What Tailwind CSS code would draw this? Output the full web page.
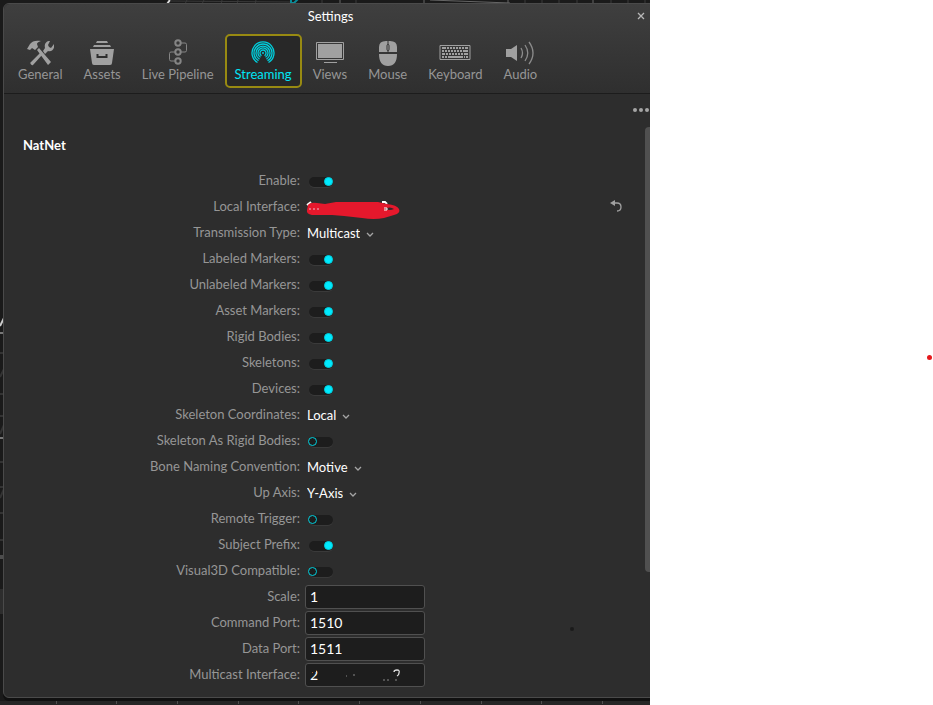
<!DOCTYPE html>
<html lang="en">
<head>
<meta charset="utf-8">
<title>Settings</title>
<script src="https://cdn.jsdelivr.net/npm/@tailwindcss/browser@4"></script>
</head>
<body class="flex min-h-screen bg-white font-['Lato',sans-serif] text-sm text-[#969696]">
<main class="relative flex min-w-0 flex-1 overflow-hidden bg-[#1a1a1a] pt-[3px] pl-[3px] pb-[7px]">
  <!-- viewport grid visible behind the window -->
  <svg class="absolute top-0 left-0" width="650" height="705" fill="none" aria-hidden="true">
    <path d="M170 0l-3 4" stroke="#ddd" stroke-width="2"/>
    <path d="M187 0l-2 4M204 0l-2 4M222 0l-1 4M238 0l-1 4M256 0l-1 4M322 0v4M356 0v4M525 0v4M542 0v4M559 0v4M577 0v4M611 0v4M628 0v4M645 0v4M170 1l120 1" stroke="#3a3a3a"/>
    <path d="M340 0v4M424 0v4M508 0v4M593 0v4M430 0l80 3" stroke="#666"/>
    <path d="M291 0v3h3l4-4" stroke="#0a8b98" stroke-width="2"/>
    <path d="M0 326l4-8" stroke="#ccc" stroke-width="2"/>
    <path d="M0 333h4M0 438h4" stroke="#777" stroke-width="2"/>
    <path d="M0 353h4M0 377l4-8M0 394h4M0 416h4M0 434l4-9M0 462h4M0 487h4M0 498l4-9M0 513h4M0 540h4" stroke="#333" stroke-width="2"/>
    <path d="M0 557h4" stroke="#4d4d4d" stroke-width="4"/>
    <path d="M0 589h4v25H0z" fill="#2d2d2d"/>
    <path d="M0 701h650v4H0z" fill="#262626"/>
    <path d="M56.500 701v3M116.500 701v3M177.500 701v3M238.500 701v3M298.500 701v3M359.500 701v3M420.500 701v3M481.500 701v3M541.500 701v3M602.500 701v3" stroke="#505050"/>
  </svg>

  <section class="relative -mr-2 flex min-w-0 flex-1 flex-col rounded-md border border-[#4a4a4a] bg-[#2d2d2d] shadow-[0_3px_0_#101010]">
    <header class="rounded-t-md border-b border-[#1c1c1c] bg-linear-to-b from-[#3f3f3f] to-[#2f2f2f] pb-[5px]">
      <div class="relative flex h-6 items-center justify-center">
        <h1 class="text-[13px] text-white">Settings</h1>
        <button class="absolute right-2 flex size-4 items-center justify-center" aria-label="Close">
          <svg width="8" height="8" stroke="#b8b8b8" stroke-width="1.300"><path d="M1 1l6 6M7 1l-6 6"/></svg>
        </button>
      </div>
      <nav class="flex gap-px pt-[6px] pl-1 text-[13px] leading-4 *:flex *:h-[54px] *:flex-col *:items-center *:rounded-[5px] *:border-2 *:border-transparent *:px-2 *:pt-[2px]">
        <button>
          <svg width="28" height="28" viewBox="0 0 28 28"><g fill="#a0a0a0"><path d="M1 11l3-5c2-3 6-4 11-3-3 1-4 2-4 3l1 3-3 3-3-2-2 2zM11 12l2-2 12 14-3 3z"/><path d="M5 24l9-9 2 2-9 10c-1 1-4-2-2-3zM17 13l2-3c-1-4 1-7 5-7l-2 4 1 2 2 1 3-4c1 5-2 8-6 7l-3 3z"/></g></svg>
          <span>General</span>
        </button>
        <button>
          <svg width="28" height="28" viewBox="0 0 28 28"><path d="M9 3h10l1 2H8zM6 7h16l1 2H5zM2 11h24l-2 14q0 2-2 2H6q-2 0-2-2z" fill="#a0a0a0"/><path d="M9.500 16v3h9v-3" fill="none" stroke="#2d2d2d" stroke-width="2"/></svg>
          <span>Assets</span>
        </button>
        <button>
          <svg width="28" height="28" viewBox="0 0 28 28" fill="none" stroke="#858585"><g stroke-width="2"><circle cx="14" cy="5" r="2.700"/><circle cx="14" cy="14" r="2.700"/><circle cx="14" cy="23" r="2.700"/></g><path d="M17 5h4q1.500 0 1.500 1.500v6q0 1.500-1.500 1.500h-4M11 14H7q-1.500 0-1.500 1.500v6Q5.500 23 7 23h4"/></svg>
          <span>Live Pipeline</span>
        </button>
        <button class="border-[#988a12]! bg-[#282828] text-[#00e5f5]">
          <svg width="28" height="28" viewBox="0 0 28 28" fill="none" stroke="#00cfdd" stroke-width="1.300"><path d="M8.500 24.500A11 11 0 1 1 19.500 24.500M9.500 22.800A9 9 0 1 1 18.500 22.800M10.500 21.100A7 7 0 1 1 17.500 21.100M11.500 19.300A5 5 0 1 1 16.500 19.300M12.500 17.600A3 3 0 1 1 15.500 17.600"/><circle cx="14" cy="15" r="1" fill="#00cfdd" stroke="none"/></svg>
          <span>Streaming</span>
        </button>
        <button>
          <svg width="30" height="28" viewBox="0 0 30 28"><path d="M1.500 4.500h27v17h-27z" fill="none" stroke="#a0a0a0"/><path d="M3 6h24v14H3zM9 24h13v1H9z" fill="#a0a0a0"/></svg>
          <span>Views</span>
        </button>
        <button>
          <svg width="28" height="28" viewBox="0 0 28 28"><path d="M5 14V9q0-6 7-6h4q7 0 7 6v5zM5 16h18c0 8-3 12-9 12S5 24 5 16z" fill="#a0a0a0"/><path d="M14 3v12" stroke="#303030"/><rect x="13" y="6.500" width="2" height="6" rx="1" fill="#a0a0a0" stroke="#303030"/></svg>
          <span>Mouse</span>
        </button>
        <button>
          <svg width="32" height="28" viewBox="0 0 32 28" fill="none" stroke="#a0a0a0"><path d="M1 7.500h30v14H1z"/><g stroke-width="2"><path d="M3 10h4M8 10h2M11 10h2M14 10h2M17 10h2M20 10h2M23 10h2M26 10h3M3 13h2M6 13h2M9 13h2M12 13h2M15 13h2M18 13h2M21 13h2M24 13h5M3 16h3M7 16h2M10 16h2M13 16h2M16 16h2M19 16h2M22 16h2M25 16h4M3 19h2M6 19h2M9 19h15M25 19h1M27 19h2"/></g></svg>
          <span>Keyboard</span>
        </button>
        <button>
          <svg width="28" height="28" viewBox="0 0 28 28"><path d="M0 11h5l6-4v16l-6-4H0z" fill="#a0a0a0"/><path d="M15 10q3 5 0 10M19 7q5.500 8 0 16M23 4q8 11 0 22" fill="none" stroke="#8c8c8c" stroke-width="1.300"/></svg>
          <span>Audio</span>
        </button>
      </nav>
    </header>

    <div class="relative flex flex-1 flex-col">
      <button class="absolute top-3 right-[6px] flex gap-[2px] p-[2px] *:size-1 *:rounded-full *:bg-[#a5a5a5]" aria-label="More options"><i></i><i></i><i></i></button>
      <div class="absolute top-[33px] right-1 h-[445px] w-2 rounded-sm bg-[#505050]"></div>
      <h2 class="mt-[41px] mb-[14px] pl-[19px] text-[13px] leading-5 font-bold text-white">NatNet</h2>

      <form class="grid auto-rows-[26px] grid-cols-[296px_1fr] items-center gap-x-[5px] text-[13px] [&>label]:pb-[3px] [&>label]:text-right
        [&_input[type=checkbox]]:relative [&_input[type=checkbox]]:ml-1 [&_input[type=checkbox]]:h-[10px] [&_input[type=checkbox]]:w-6 [&_input[type=checkbox]]:appearance-none [&_input[type=checkbox]]:rounded-full [&_input[type=checkbox]]:bg-[#1d1d1d] [&_input[type=checkbox]]:shadow-[0_1px_0_#3a3a3a]
        [&_input[type=checkbox]]:before:absolute [&_input[type=checkbox]]:before:top-0 [&_input[type=checkbox]]:before:-left-px [&_input[type=checkbox]]:before:size-[9px] [&_input[type=checkbox]]:before:rounded-full [&_input[type=checkbox]]:before:border [&_input[type=checkbox]]:before:border-[#00cfdd]
        [&_input[type=checkbox]:checked]:before:left-[15px] [&_input[type=checkbox]:checked]:before:bg-[#00eaff]
        [&_input[type=text]]:h-6 [&_input[type=text]]:w-[120px] [&_input[type=text]]:rounded-[3px] [&_input[type=text]]:border [&_input[type=text]]:border-[#505050] [&_input[type=text]]:bg-[#1d1d1d] [&_input[type=text]]:px-1 [&_input[type=text]]:text-sm [&_input[type=text]]:text-white
        [&_div:has(>input[type=text])]:pb-[3px] [&_div:has(>select)]:pb-[2px]
        [&_select]:field-sizing-content [&_select]:appearance-none [&_select]:bg-transparent [&_select]:text-white">
        <label for="enable">Enable:</label>
        <div class="flex"><input id="enable" type="checkbox" checked></div>

        <label for="local">Local Interface:</label>
        <div class="flex items-center justify-between pr-[34px]">
          <button id="local" type="button" class="ml-px h-6 w-[100px]" aria-label="Local Interface">
            <svg width="100" height="24" viewBox="0 0 100 24" fill="none"><path d="M1 9l4-3M76 6h3l2 2" stroke="#fff" stroke-width="2"/><path d="M2 9q2-3 9-2l8 1 11-2h42l9 2q10 1 12 5 2 4-5 6l-10 3q-10 2-22 0l-18-2-12-1H6q-6-1-5-5z" fill="#e5182c"/><path d="M78 13q6-3 10 0-4 2-10 0z" fill="#392629"/><path d="M78 12h3v2h-3" stroke="#fff"/><path d="M3 13h12" stroke="#eebbc8" stroke-dasharray="2 2"/></svg>
          </button>
          <button type="button" class="pb-1" aria-label="Reset"><svg width="14" height="14" viewBox="0 0 14 14"><path d="M1 4l5-3v6z" fill="#a0a0a0"/><path d="M5 4h3q4 0 4 4t-4 4" fill="none" stroke="#a0a0a0" stroke-width="1.300"/></svg></button>
        </div>

        <label for="trans">Transmission Type:</label>
        <div class="flex items-center gap-[6px] pl-[2px]"><select id="trans"><option>Multicast</option></select><svg class="mt-1" width="8" height="6" fill="none" stroke="#a5a5a5" stroke-width="1.300"><path d="M1 1l3 3 3-3"/></svg></div>

        <label for="labeled">Labeled Markers:</label>
        <div class="flex"><input id="labeled" type="checkbox" checked></div>
        <label for="unlabeled">Unlabeled Markers:</label>
        <div class="flex"><input id="unlabeled" type="checkbox" checked></div>
        <label for="asset">Asset Markers:</label>
        <div class="flex"><input id="asset" type="checkbox" checked></div>
        <label for="rigid">Rigid Bodies:</label>
        <div class="flex"><input id="rigid" type="checkbox" checked></div>
        <label for="skeletons">Skeletons:</label>
        <div class="flex"><input id="skeletons" type="checkbox" checked></div>
        <label for="devices">Devices:</label>
        <div class="flex"><input id="devices" type="checkbox" checked></div>

        <label for="coords">Skeleton Coordinates:</label>
        <div class="flex items-center gap-[6px] pl-[2px]"><select id="coords"><option>Local</option></select><svg class="mt-1" width="8" height="6" fill="none" stroke="#a5a5a5" stroke-width="1.300"><path d="M1 1l3 3 3-3"/></svg></div>
        <label for="asrigid">Skeleton As Rigid Bodies:</label>
        <div class="flex"><input id="asrigid" type="checkbox"></div>
        <label for="bone">Bone Naming Convention:</label>
        <div class="flex items-center gap-[6px] pl-[2px]"><select id="bone"><option>Motive</option></select><svg class="mt-1" width="8" height="6" fill="none" stroke="#a5a5a5" stroke-width="1.300"><path d="M1 1l3 3 3-3"/></svg></div>
        <label for="axis">Up Axis:</label>
        <div class="flex items-center gap-[6px] pl-[2px]"><select id="axis"><option>Y-Axis</option></select><svg class="mt-1" width="8" height="6" fill="none" stroke="#a5a5a5" stroke-width="1.300"><path d="M1 1l3 3 3-3"/></svg></div>
        <label for="remote">Remote Trigger:</label>
        <div class="flex"><input id="remote" type="checkbox"></div>
        <label for="prefix">Subject Prefix:</label>
        <div class="flex"><input id="prefix" type="checkbox" checked></div>
        <label for="v3d">Visual3D Compatible:</label>
        <div class="flex"><input id="v3d" type="checkbox"></div>

        <label for="scale">Scale:</label>
        <div class="flex"><input id="scale" type="text" value="1"></div>
        <label for="cmd">Command Port:</label>
        <div class="flex"><input id="cmd" type="text" value="1510"></div>
        <label for="data">Data Port:</label>
        <div class="flex"><input id="data" type="text" value="1511"></div>
        <label for="multi">Multicast Interface:</label>
        <div class="relative flex">
          <input id="multi" type="text" value="2">
          <svg class="pointer-events-none absolute top-0 left-0" width="120" height="24" fill="none"><path d="M89 9q0-2 3-2t2 3q0 2-2 3" stroke="#ddd" stroke-width="1.300"/><path d="M3 6h8v3H3zM3 9h4v3H3z" fill="#1d1d1d"/><path d="M41 13h1M48 12h2M78 17h2M82 17h2M90 17h2" stroke="#888"/></svg>
        </div>
      </form>
      <span class="absolute top-[533px] left-[566px] size-1 rounded-full bg-[#1a1a1a]"></span>
    </div>
  </section>
</main>
<aside class="relative w-[283px] shrink-0 bg-white">
  <span class="absolute top-[355px] right-[1px] size-[5px] rounded-full bg-[#e5181c]"></span>
</aside>
</body>
</html>
